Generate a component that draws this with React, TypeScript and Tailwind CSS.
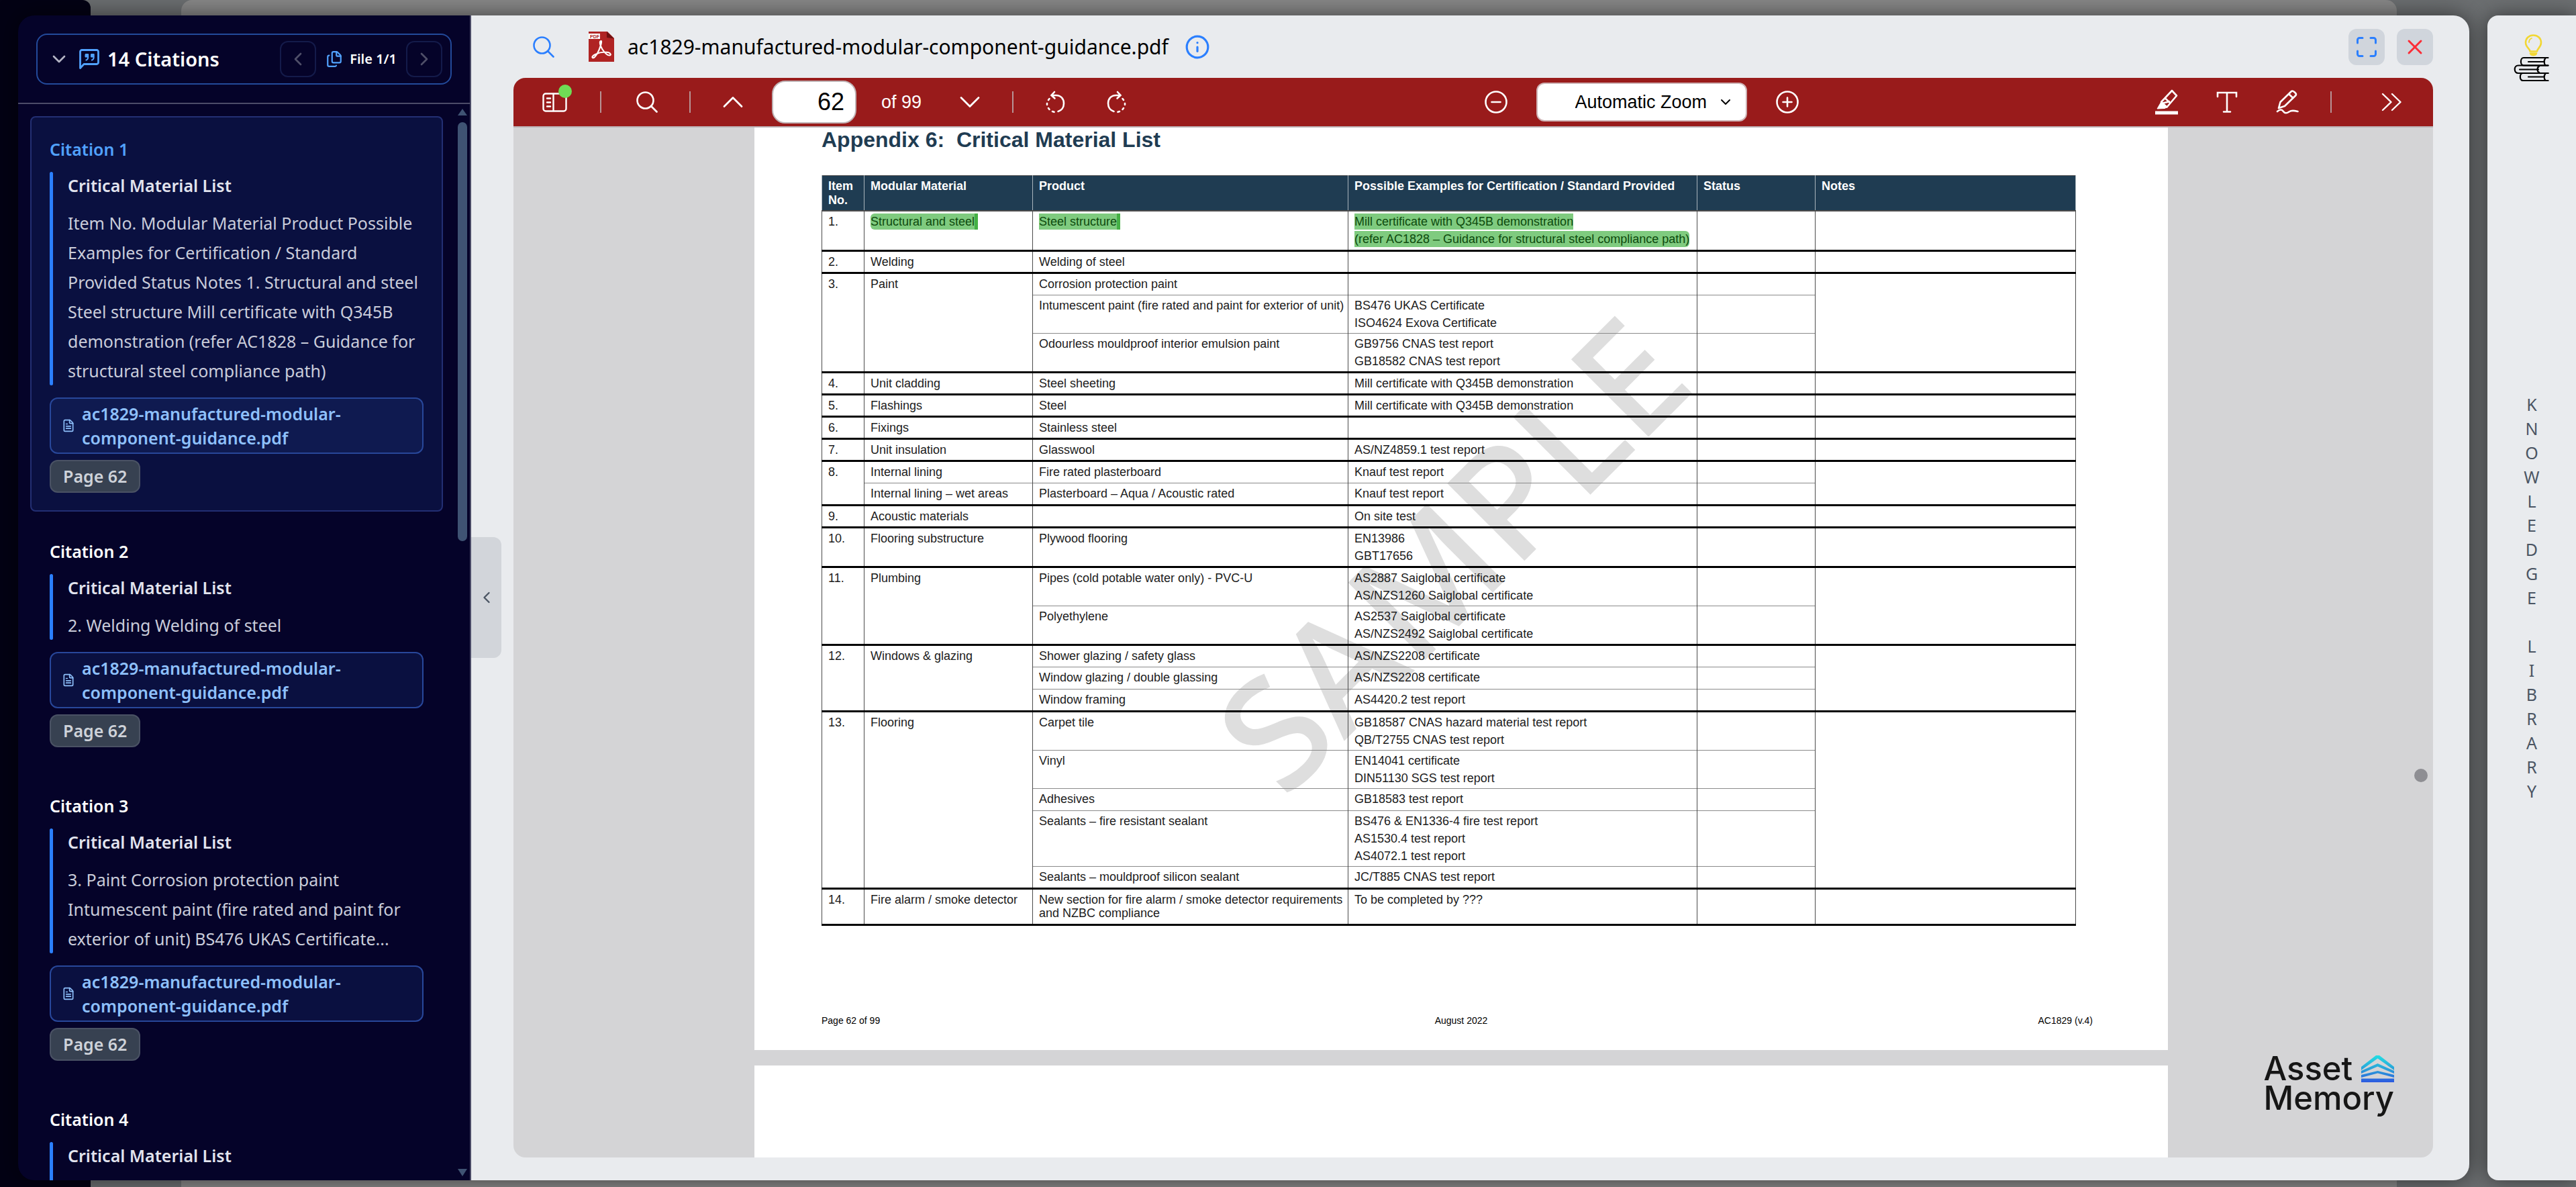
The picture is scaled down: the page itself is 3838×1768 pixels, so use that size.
import type { ReactNode } from "react";
import { ChevronDown, ChevronLeft, ChevronRight, ChevronUp, Files, FileText, Info, X } from "lucide-react";

interface Citation {
  id: number;
  heading: string;
  excerpt: string;
  page: number;
}

interface Line {
  material?: string;
  product?: string;
  examples: string[];
}

interface Item {
  no: string;
  lines: Line[];
}

const FILE_NAME = "ac1829-manufactured-modular-component-guidance.pdf";

const CITATIONS: Citation[] = [
  {
    id: 1,
    heading: "Critical Material List",
    excerpt:
      "Item No. Modular Material Product Possible Examples for Certification / Standard Provided Status Notes 1. Structural and steel Steel structure Mill certificate with Q345B demonstration (refer AC1828 – Guidance for structural steel compliance path)",
    page: 62,
  },
  { id: 2, heading: "Critical Material List", excerpt: "2. Welding Welding of steel", page: 62 },
  {
    id: 3,
    heading: "Critical Material List",
    excerpt:
      "3. Paint Corrosion protection paint Intumescent paint (fire rated and paint for exterior of unit) BS476 UKAS Certificate...",
    page: 62,
  },
  { id: 4, heading: "Critical Material List", excerpt: "4. Unit cladding Steel sheeting", page: 62 },
];

const ITEMS: Item[] = [
  { no: "2.", lines: [{ material: "Welding", product: "Welding of steel", examples: [] }] },
  {
    no: "3.",
    lines: [
      { material: "Paint", product: "Corrosion protection paint", examples: [] },
      {
        product: "Intumescent paint (fire rated and paint for exterior of unit)",
        examples: ["BS476 UKAS Certificate", "ISO4624 Exova Certificate"],
      },
      {
        product: "Odourless mouldproof interior emulsion paint",
        examples: ["GB9756 CNAS test report", "GB18582 CNAS test report"],
      },
    ],
  },
  {
    no: "4.",
    lines: [{ material: "Unit cladding", product: "Steel sheeting", examples: ["Mill certificate with Q345B demonstration"] }],
  },
  {
    no: "5.",
    lines: [{ material: "Flashings", product: "Steel", examples: ["Mill certificate with Q345B demonstration"] }],
  },
  { no: "6.", lines: [{ material: "Fixings", product: "Stainless steel", examples: [] }] },
  { no: "7.", lines: [{ material: "Unit insulation", product: "Glasswool", examples: ["AS/NZ4859.1 test report"] }] },
  {
    no: "8.",
    lines: [
      { material: "Internal lining", product: "Fire rated plasterboard", examples: ["Knauf test report"] },
      {
        material: "Internal lining – wet areas",
        product: "Plasterboard – Aqua / Acoustic rated",
        examples: ["Knauf test report"],
      },
    ],
  },
  { no: "9.", lines: [{ material: "Acoustic materials", examples: ["On site test"] }] },
  {
    no: "10.",
    lines: [{ material: "Flooring substructure", product: "Plywood flooring", examples: ["EN13986", "GBT17656"] }],
  },
  {
    no: "11.",
    lines: [
      {
        material: "Plumbing",
        product: "Pipes (cold potable water only) - PVC-U",
        examples: ["AS2887 Saiglobal certificate", "AS/NZS1260 Saiglobal certificate"],
      },
      {
        product: "Polyethylene",
        examples: ["AS2537 Saiglobal certificate", "AS/NZS2492 Saiglobal certificate"],
      },
    ],
  },
  {
    no: "12.",
    lines: [
      { material: "Windows & glazing", product: "Shower glazing / safety glass", examples: ["AS/NZS2208 certificate"] },
      { product: "Window glazing / double glassing", examples: ["AS/NZS2208 certificate"] },
      { product: "Window framing", examples: ["AS4420.2 test report"] },
    ],
  },
  {
    no: "13.",
    lines: [
      {
        material: "Flooring",
        product: "Carpet tile",
        examples: ["GB18587 CNAS hazard material test report", "QB/T2755 CNAS test report"],
      },
      { product: "Vinyl", examples: ["EN14041 certificate", "DIN51130 SGS test report"] },
      { product: "Adhesives", examples: ["GB18583 test report"] },
      {
        product: "Sealants – fire resistant sealant",
        examples: ["BS476 & EN1336-4 fire test report", "AS1530.4 test report", "AS4072.1 test report"],
      },
      { product: "Sealants – mouldproof silicon sealant", examples: ["JC/T885 CNAS test report"] },
    ],
  },
];

const COLUMNS = [
  "Item No.",
  "Modular Material",
  "Product",
  "Possible Examples for Certification / Standard Provided",
  "Status",
  "Notes",
];

const CELL = "border-x border-[#4b4b4b] py-0.5 pr-1 pl-[9px] align-top leading-[26px]";
const HEAVY = "border-t-[3px] border-t-black";
const DOTTED = "border-t border-t-[#8a8a8a]";
const MARK = "bg-[#7fcb7f] text-[#0d4a0d]";

function QuoteIcon() {
  return (
    <svg viewBox="0 0 30 30" className="size-[30px] text-blue-400" fill="none" stroke="currentColor" strokeWidth="2.8" strokeLinejoin="round">
      <path d="M1.5 28.5V4A2.500 2.500 0 0 1 4 1.500h22A2.500 2.500 0 0 1 28.500 4v16a2.500 2.500 0 0 1-2.500 2.500H7z" />
      <path d="M9 8h4.200v4.500c0 2.200-1.200 3.600-3.600 4.200M17.500 8h4.200v4.500c0 2.200-1.200 3.600-3.600 4.200" strokeWidth="2" />
      <path d="M9 8h4v4H9zM17.500 8h4v4h-4z" fill="currentColor" strokeWidth="1" />
    </svg>
  );
}

function MagnifierIcon() {
  return (
    <svg viewBox="0 0 32 32" className="size-8" fill="none" stroke="currentColor" strokeWidth="2.6" strokeLinecap="round">
      <circle cx="13.5" cy="13.5" r="12" />
      <path d="M22 22l8.500 8.500" />
    </svg>
  );
}

function PdfIcon() {
  return (
    <svg viewBox="0 0 38 45" className="h-[45px] w-[38px]">
      <path d="M0 0h28l10 10v35H0z" fill="#b02323" />
      <path d="M27 0l11 10.500L27 9z" fill="#6d1010" />
      <rect y="3" width="17" height="8" fill="#fff" />
      <text x="2" y="10" fontSize="7" fontWeight="700" fontFamily="Liberation Sans, sans-serif" fill="#b02323">
        PDF
      </text>
      <path
        d="M18.500 14c-3 0-1.500 7 2 12.500 3 4.500 7.500 9 10.500 9s2-3.500-2-4.500c-6-1.200-14 .5-19 3-4 2-5.500 4-4 5s4-1.500 7-6.500c3.500-6 7.500-18.500 5.500-18.500z"
        fill="none"
        stroke="#fff"
        strokeWidth="2.200"
      />
    </svg>
  );
}

function SidebarIcon() {
  return (
    <svg viewBox="0 0 37 29" className="h-[29px] w-[37px]" fill="none" stroke="currentColor" strokeWidth="2.4" strokeLinecap="round">
      <rect x="1.500" y="1.500" width="34" height="26" rx="3.500" />
      <path d="M16.500 2v25M7 8.500h5M7 14.500h5M7 20.500h5" />
    </svg>
  );
}

function RotateIcon({ flip }: { flip?: boolean }) {
  return (
    <svg
      viewBox="0 0 30 34"
      className={flip ? "h-[34px] w-[30px] -scale-x-100" : "h-[34px] w-[30px]"}
      fill="none"
      stroke="currentColor"
      strokeWidth="2.6"
      strokeLinecap="round"
    >
      <path d="M13 2L8.500 7l5 4.500M9 7h6.500c7 0 11.500 5 11.500 12 0 6-3.500 10.500-8.500 12" />
      <path d="M5.500 12l-1.500 2M2 19v2M4 26l1.500 2M10 31l2.500.8" />
    </svg>
  );
}

function HighlightIcon() {
  return (
    <svg viewBox="0 0 36 40" className="h-10 w-9" fill="none" stroke="currentColor" strokeWidth="2.6" strokeLinejoin="round">
      <path d="M10 20L26 3l7 7.500-14.500 17zM15.500 14l8 7.500M11 22l12-3" />
      <path d="M9.500 20.500l8.500 7.500-3 1.500-11 .5z" fill="currentColor" strokeWidth="1" />
      <path d="M1 36h34" strokeWidth="5" />
    </svg>
  );
}

function TextIcon() {
  return (
    <svg viewBox="0 0 32 34" className="h-[34px] w-8" fill="none" stroke="currentColor" strokeWidth="2.6" strokeLinecap="round">
      <path d="M2 9V3h28v6M16 3v28M11 31.500h10" />
    </svg>
  );
}

function PenIcon() {
  return (
    <svg viewBox="0 0 34 38" className="h-[38px] w-[34px]" fill="none" stroke="currentColor" strokeWidth="2.6" strokeLinecap="round" strokeLinejoin="round">
      <path d="M4 28l2.500-9L23 3c2-2 8.500 3.500 6.500 6L13 25zM19 7l6.500 6" />
      <path d="M2 33c4-3.500 7-3 9 0s5 3 8.500.5 7-2 13-.5" />
    </svg>
  );
}

function BooksIcon() {
  return (
    <svg viewBox="0 0 54 70" className="h-[70px] w-[54px]" fill="none" strokeWidth="2.6" strokeLinecap="round" strokeLinejoin="round">
      <g stroke="#f2d733">
        <path d="M24.500 25.500c0-4-6.500-6-6.500-13 0-6.500 5-11 11.500-11S41 6 41 12.500c0 7-6 9-6 13z" />
        <path d="M23 12c0-3 1.500-5 4-6" strokeWidth="1.8" />
        <path d="M25 28.500c1 3.500 8 3.500 9 0z" fill="#f2d733" />
      </g>
      <g stroke="#000" strokeWidth="2.200">
        <path d="M51.500 35H15c-5.500 0-5.500 11.500 0 11.500h36.500M47.500 35.500c-2.500 3-2.500 8 0 11M22 41h24" />
        <path d="M51.500 46.500H7c-7 0-7 11.500 0 11.500h44.500M38.500 47c-4 3-4 8 0 10.500M9 52.500h28" />
        <path d="M51.500 58H14c-5.500 0-5.500 11 0 11h37.500M47.500 58.500c-2.500 3-2.500 7.500 0 10.500M22 63.500h24" />
      </g>
    </svg>
  );
}

function RoofIcon() {
  return (
    <svg viewBox="0 0 49 40" className="h-10 w-[49px]">
      <defs>
        <linearGradient id="roof" gradientUnits="userSpaceOnUse" x1="0" y1="0" x2="0" y2="40">
          <stop offset="0" stopColor="#22dfe3" />
          <stop offset="0.55" stopColor="#2a9bd8" />
          <stop offset="1" stopColor="#2b59e0" />
        </linearGradient>
      </defs>
      <path
        d="M0 17L22 0h5l22 17v5L24.500 4.500 0 22zM0 23l24.500-11L49 23v4L24.500 16.500 0 27zM0 29l24.500-6L49 29v4l-24.500-6.500L0 33zM0 34.500h49V40H0z"
        fill="url(#roof)"
      />
    </svg>
  );
}

function ToolButton({ label, children }: { label: string; children: ReactNode }) {
  return (
    <button aria-label={label} className="flex h-14 w-[60px] items-center justify-center">
      {children}
    </button>
  );
}

function CitationCard({ citation, active }: { citation: Citation; active: boolean }) {
  return (
    <article
      className={`shrink-0 rounded-lg border-2 px-[27px] pt-7 pb-[26px] ${
        active ? "border-[#232f73] bg-[#0a1040]" : "border-transparent"
      }`}
    >
      <h3 className={`mb-[15px] text-[25px] leading-[38px] font-semibold ${active ? "text-blue-400" : "text-white"}`}>
        Citation {citation.id}
      </h3>
      <div className="flex gap-[22px]">
        <div className="w-[5px] shrink-0 rounded-sm bg-blue-500" />
        <div>
          <h4 className="mb-3.5 text-[25px] leading-10 font-semibold text-[#e2e4ee]">{citation.heading}</h4>
          <p className="text-[25px] leading-[44px] text-[#c9ccda]">{citation.excerpt}</p>
        </div>
      </div>
      <a
        href="#document"
        className={`mt-[18px] flex items-center gap-2.5 rounded-xl border-2 border-[#28479a] px-4 py-1 text-[25px] leading-9 font-semibold text-[#8ec0fb] ${
          active ? "bg-[#0f1a50]" : "bg-[#0a1040]"
        }`}
      >
        <FileText className="size-5 shrink-0" strokeWidth={2} />
        <span>{FILE_NAME}</span>
      </a>
      <button className="mt-[9px] block h-[49px] rounded-xl border-2 border-[#4a5264] bg-[#374151] px-[18px] text-[25px] font-semibold text-[#ced2d9]">
        Page {citation.page}
      </button>
    </article>
  );
}

function CitationPanel() {
  return (
    <aside className="flex w-[675px] shrink-0 flex-col border-r-2 border-[#4a4a66] bg-[#050329]">
      <header className="border-b-2 border-[#4c4c68] p-[27px]">
        <div className="flex h-[76px] items-center rounded-2xl border-2 border-[#234a9a] pr-3 pl-4">
          <button aria-label="Collapse citations" className="text-[#b4b4c4]">
            <ChevronDown className="size-8" strokeWidth={2} />
          </button>
          <h2 className="ml-3.5 flex items-center gap-3 text-[29px] font-semibold text-white">
            <QuoteIcon />
            14 Citations
          </h2>
          <div className="ml-auto flex items-center gap-3.5">
            <button aria-label="Previous file" className="flex size-[54px] items-center justify-center rounded-xl border-2 border-[#141b4a] text-[#4f4f68]">
              <ChevronLeft className="size-8" strokeWidth={2} />
            </button>
            <span className="flex items-center gap-2.5 text-[20px] font-semibold text-white">
              <Files className="size-[26px] text-blue-400" strokeWidth={2} />
              File 1/1
            </span>
            <button aria-label="Next file" className="flex size-[54px] items-center justify-center rounded-xl border-2 border-[#141b4a] text-[#4f4f68]">
              <ChevronRight className="size-8" strokeWidth={2} />
            </button>
          </div>
        </div>
      </header>
      <div className="flex min-h-0 flex-1">
        <div className="flex min-w-0 flex-1 flex-col gap-2.5 overflow-hidden pt-[18px] pr-[22px] pl-[18px]">
          {CITATIONS.map((citation) => (
            <CitationCard key={citation.id} citation={citation} active={citation.id === 1} />
          ))}
        </div>
        {/* Scrollbar */}
        <div className="flex w-[18px] flex-col items-center pt-[7px] pr-1 pb-1.5 text-[#3f5373]">
          <svg viewBox="0 0 14 10" className="h-2.5 w-3.5" fill="currentColor">
            <path d="M7 0l7 10H0z" />
          </svg>
          <div className="mt-2.5 flex flex-1 flex-col">
            <div className="h-[40%] w-3.5 rounded-full bg-[#3f5373]" />
          </div>
          <svg viewBox="0 0 14 11" className="h-[11px] w-3.5" fill="currentColor">
            <path d="M7 11l7-11H0z" />
          </svg>
        </div>
      </div>
    </aside>
  );
}

function Toolbar() {
  return (
    <div className="flex h-[74px] shrink-0 items-center justify-between border-b-2 border-[#bdb4b8] bg-[#991b1b] pr-8 pl-[31px] font-['Liberation_Sans',sans-serif] text-white">
      <div className="flex items-center">
        <div className="relative">
          <ToolButton label="Toggle sidebar">
            <SidebarIcon />
          </ToolButton>
          <span className="absolute top-0.5 right-1 size-5 rounded-full bg-[#6fdc55]" />
        </div>
        <span className="mx-[38px] h-8 w-0.5 bg-[#b79496]" />
        <ToolButton label="Find">
          <MagnifierIcon />
        </ToolButton>
        <span className="mx-[33px] h-8 w-0.5 bg-[#b79496]" />
        <ToolButton label="Previous page">
          <ChevronUp className="size-[52px]" strokeWidth={1.3} />
        </ToolButton>
        <input
          aria-label="Page"
          defaultValue="62"
          className="ml-7 h-16 w-[126px] rounded-[20px] border-2 border-[#bfb3b5] bg-white pr-4 text-right text-[36px] text-black"
        />
        <span className="mr-[42px] ml-[37px] text-[27px]">of 99</span>
        <ToolButton label="Next page">
          <ChevronDown className="size-[52px]" strokeWidth={1.3} />
        </ToolButton>
        <span className="mx-[33px] h-8 w-0.5 bg-[#b79496]" />
        <ToolButton label="Rotate counterclockwise">
          <RotateIcon />
        </ToolButton>
        <span className="w-[30px]" />
        <ToolButton label="Rotate clockwise">
          <RotateIcon flip />
        </ToolButton>
      </div>

      <div className="flex items-center gap-[30px]">
        <ToolButton label="Zoom out">
          <svg viewBox="0 0 34 34" className="size-[34px]" fill="none" stroke="currentColor" strokeWidth="2.6" strokeLinecap="round">
            <circle cx="17" cy="17" r="15.500" />
            <path d="M10.500 17h13" />
          </svg>
        </ToolButton>
        <div className="relative">
          <select
            aria-label="Zoom"
            className="h-[58px] w-[314px] appearance-none rounded-xl border-2 border-[#cdb2b4] bg-white pl-14 text-[27px] text-black"
          >
            <option>Automatic Zoom</option>
          </select>
          <ChevronDown className="pointer-events-none absolute top-[17px] right-5 size-6 text-black" strokeWidth={2} />
        </div>
        <ToolButton label="Zoom in">
          <svg viewBox="0 0 34 34" className="size-[34px]" fill="none" stroke="currentColor" strokeWidth="2.6" strokeLinecap="round">
            <circle cx="17" cy="17" r="15.500" />
            <path d="M10.500 17h13M17 10.500v13" />
          </svg>
        </ToolButton>
      </div>

      <div className="flex items-center">
        <div className="flex items-center gap-[30px]">
          <ToolButton label="Highlight">
            <HighlightIcon />
          </ToolButton>
          <ToolButton label="Text">
            <TextIcon />
          </ToolButton>
          <ToolButton label="Draw">
            <PenIcon />
          </ToolButton>
        </div>
        <span className="mr-[59px] ml-[34px] h-8 w-0.5 bg-[#b79496]" />
        <ToolButton label="Tools">
          <svg viewBox="0 0 30 28" className="h-7 w-[30px]" fill="none" stroke="currentColor" strokeWidth="2.4" strokeLinecap="round" strokeLinejoin="round">
            <path d="M2 2l12.500 12L2 26M16 2l12.500 12L16 26" />
          </svg>
        </ToolButton>
      </div>
    </div>
  );
}

function MaterialTable() {
  return (
    <table className="w-[1869px] table-fixed border-collapse border border-[#4b4b4b] text-left text-[18px] whitespace-nowrap text-[#1c1c1c]">
      <colgroup>
        <col className="w-[63px]" />
        <col className="w-[251px]" />
        <col className="w-[470px]" />
        <col className="w-[520px]" />
        <col className="w-[176px]" />
        <col />
      </colgroup>
      <thead>
        <tr className="h-[52px] bg-[#1f3c52] text-white">
          {COLUMNS.map((title) => (
            <th key={title} className="border-x border-[#a9b4bc] pt-[5px] pr-1 pb-1 pl-[9px] align-top leading-[21px] font-bold whitespace-normal">
              {title}
            </th>
          ))}
        </tr>
      </thead>
      <tbody>
        <tr className="h-[59px] border-t-2 border-t-[#4b4b4b]">
          <td className={CELL}>1.</td>
          <td className={CELL}>
            <mark className={`${MARK} rounded-l-md border-r-[5px] border-[#45b045] py-0.5`}>Structural and steel</mark>
          </td>
          <td className={CELL}>
            <mark className={`${MARK} border-r-[5px] border-[#45b045] py-0.5`}>Steel structure</mark>
          </td>
          <td className={CELL}>
            <mark className={`${MARK} py-0.5`}>Mill certificate with Q345B demonstration</mark>
            <br />
            <mark className={`${MARK} rounded-r-md py-0.5`}>
              (refer AC1828 – Guidance for structural steel compliance path)
            </mark>
          </td>
          <td className={CELL} />
          <td className={CELL} />
        </tr>
        {ITEMS.map((item) =>
          item.lines.map((line, index) => {
            const edge = index === 0 ? HEAVY : DOTTED;
            // a material spans every line below it that names none of its own
            const materialSpan = item.lines.every((l, i) => i === 0 || !l.material) ? item.lines.length : 1;
            return (
              <tr key={`${item.no}${index}`} className="h-[33px]">
                {index === 0 && (
                  <td rowSpan={item.lines.length} className={`${CELL} ${HEAVY}`}>
                    {item.no}
                  </td>
                )}
                {line.material && (
                  <td rowSpan={materialSpan} className={`${CELL} ${edge}`}>
                    {line.material}
                  </td>
                )}
                <td className={`${CELL} ${edge}`}>{line.product}</td>
                <td className={`${CELL} ${edge}`}>
                  {line.examples.map((example) => (
                    <div key={example}>{example}</div>
                  ))}
                </td>
                <td className={`${CELL} ${edge}`} />
                {index === 0 && <td rowSpan={item.lines.length} className={`${CELL} ${HEAVY}`} />}
              </tr>
            );
          })
        )}
        <tr className="h-[54px] border-y-[3px] border-black">
          <td className={CELL}>14.</td>
          <td className={CELL}>Fire alarm / smoke detector</td>
          <td className="border-x border-[#4b4b4b] pt-[5px] pl-[9px] align-top leading-5">
            New section for fire alarm / smoke detector requirements
            <br />
            and NZBC compliance
          </td>
          <td className={CELL}>To be completed by ???</td>
          <td className={CELL} />
          <td className={CELL} />
        </tr>
      </tbody>
    </table>
  );
}

function DocumentPage() {
  return (
    <div id="document" className="relative flex h-[1374px] w-[2106px] max-w-full shrink-0 flex-col bg-white px-[100px] font-['Liberation_Sans',sans-serif]">
      {/* Watermark */}
      <span className="pointer-events-none absolute top-[632px] left-[1036px] -translate-x-1/2 -translate-y-1/2 -rotate-45 font-['Noto_Sans',sans-serif] text-[228px] leading-none font-medium text-[#dedede]">
        SAMPLE
      </span>
      <h1 className="relative mb-[35px] text-[32px] leading-9 font-bold whitespace-pre text-[#1f3c52]">
        {"Appendix 6:  Critical Material List"}
      </h1>
      <div className="relative">
        <MaterialTable />
      </div>
      <footer className="mt-auto mb-[34px] grid grid-cols-3 text-[14px] leading-5 text-black">
        <span>Page 62 of 99</span>
        <span className="text-center">August 2022</span>
        <span className="pr-3 text-right">AC1829 (v.4)</span>
      </footer>
    </div>
  );
}

function Viewer() {
  return (
    <section className="relative flex min-w-0 flex-1 flex-col bg-[#e9ebee] pr-[54px] pb-[34px] pl-[63px]">
      <header className="flex h-[93px] shrink-0 items-center pl-[29px]">
        <button aria-label="Search" className="text-blue-500">
          <MagnifierIcon />
        </button>
        <span className="ml-[51px]">
          <PdfIcon />
        </span>
        <h2 className="ml-5 text-[30px] text-black">{FILE_NAME}</h2>
        <button aria-label="File details" className="ml-6 text-blue-500">
          <Info className="size-[38px]" strokeWidth={2} />
        </button>
        <div className="ml-auto flex gap-[18px]">
          <button aria-label="Full screen" className="flex size-[54px] items-center justify-center rounded-xl bg-[#d0d5dc] text-blue-500">
            <svg viewBox="0 0 30 30" className="size-[30px]" fill="none" stroke="currentColor" strokeWidth="3" strokeLinecap="round">
              <path d="M1.500 9V4.500a3 3 0 0 1 3-3H9M21 1.500h4.500a3 3 0 0 1 3 3V9M28.500 21v4.500a3 3 0 0 1-3 3H21M9 28.500H4.500a3 3 0 0 1-3-3V21" />
            </svg>
          </button>
          <button aria-label="Close" className="flex size-[54px] items-center justify-center rounded-xl bg-[#d0d5dc] text-red-500">
            <X className="size-9" strokeWidth={2} />
          </button>
        </div>
      </header>

      <div className="relative flex min-h-0 flex-1 flex-col overflow-hidden rounded-[18px] bg-[#d4d4d6]">
        <Toolbar />
        <div className="flex min-h-0 flex-1">
          <div className="flex min-w-0 flex-1 flex-col items-center gap-[23px] overflow-hidden">
            <DocumentPage />
            <div className="h-[1488px] w-[2106px] max-w-full shrink-0 bg-white" />
          </div>
          <div className="flex w-9 flex-col items-center">
            <span className="grow-[65]" />
            <span className="size-5 rounded-full bg-[#8e8e93]" />
            <span className="grow-[38]" />
          </div>
        </div>

        {/* Brand mark */}
        <div className="absolute right-[58px] bottom-[66px] font-['Inter',sans-serif] text-[49px] leading-[44px] font-medium text-[#161616]">
          <div className="flex items-center justify-between">
            Asset
            <RoofIcon />
          </div>
          <div>Memory</div>
        </div>
      </div>

      <button
        aria-label="Hide citations"
        className="absolute top-[777px] left-0 flex h-[180px] w-[45px] items-center justify-center rounded-r-xl bg-[#d2d5da] text-[#4b5563]"
      >
        <ChevronLeft className="size-7" strokeWidth={2} />
      </button>
    </section>
  );
}

function KnowledgeLibrary() {
  return (
    <aside className="flex w-[132px] shrink-0 flex-col items-center rounded-l-2xl bg-[#e9ebee] pt-7 shadow-[0_0_30px_rgba(0,0,0,0.5)]">
      <button aria-label="Open knowledge library">
        <BooksIcon />
      </button>
      <p className="mt-[463px] flex flex-col items-center text-[25px] leading-9 text-[#4b5563]">
        {"KNOWLEDGE LIBRARY".split("").map((letter, index) => (
          <span key={index} className="h-9">
            {letter}
          </span>
        ))}
      </p>
    </aside>
  );
}

export default function App() {
  return (
    <div className="relative h-screen overflow-hidden bg-[#6c6f71] font-['Noto_Sans','Open_Sans',sans-serif]">
      {/* Dimmed page behind the dialog */}
      <div className="absolute inset-0 flex">
        <div className="w-[135px] rounded-tr-xl bg-[#030214]" />
        <div className="mr-[267px] ml-[135px] flex-1 rounded-t-2xl bg-[#888888]" />
      </div>

      <div className="relative flex h-full gap-[27px] pt-[23px] pb-2.5 pl-[27px]">
        <main className="flex min-w-0 flex-1 overflow-hidden rounded-3xl shadow-[0_0_34px_rgba(0,0,0,0.55)]">
          <CitationPanel />
          <Viewer />
        </main>
        <KnowledgeLibrary />
      </div>
    </div>
  );
}
